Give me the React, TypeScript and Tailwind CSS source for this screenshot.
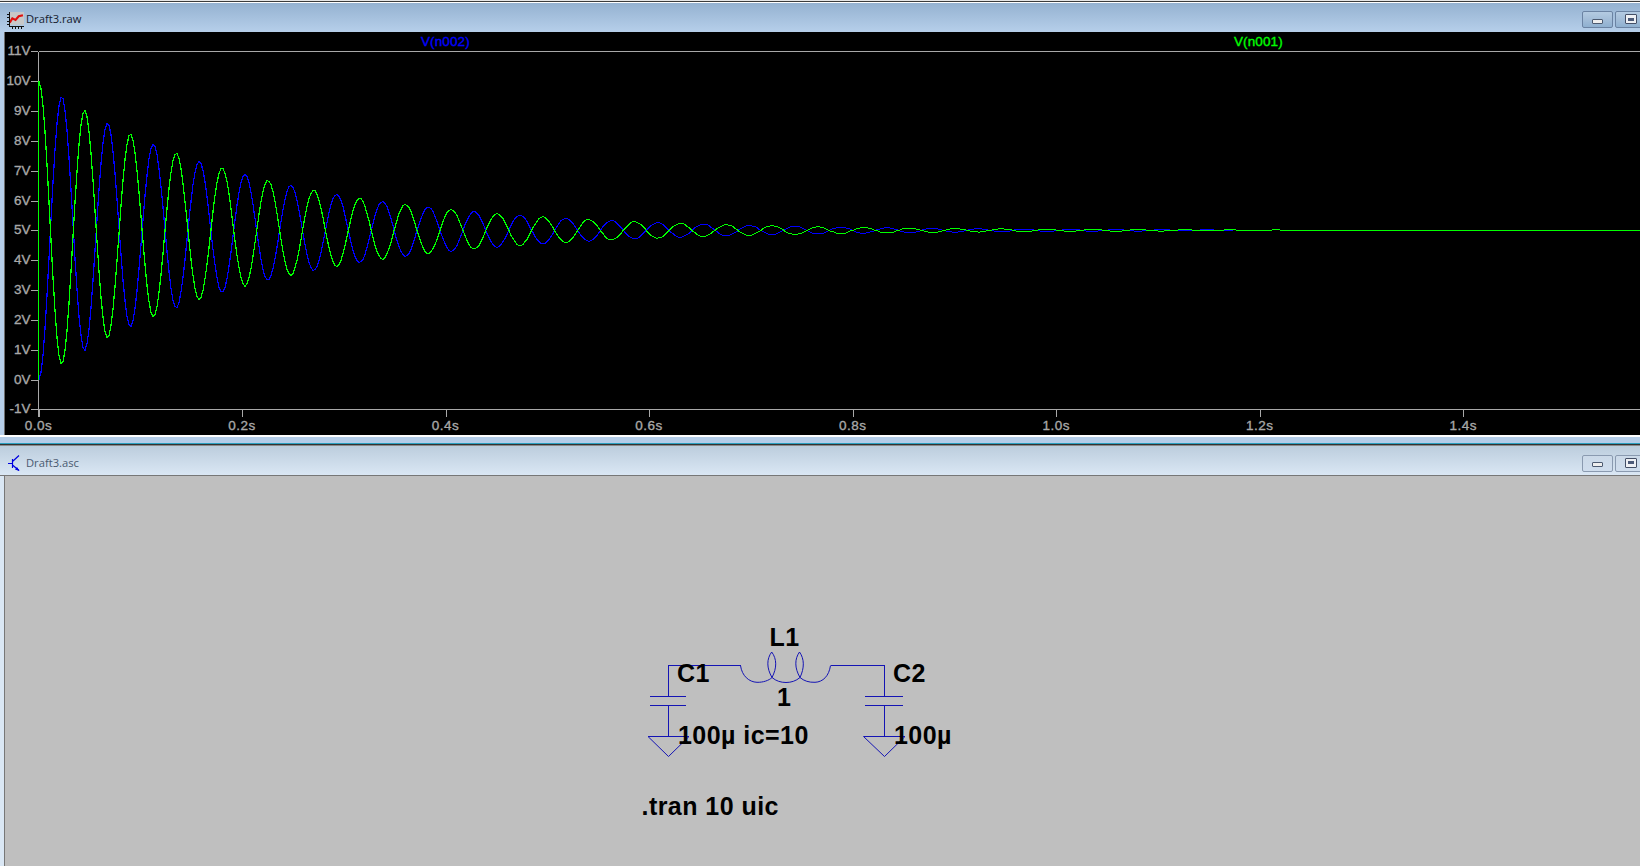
import React from "react";

const X0 = 38.5;
const PX_PER_S = 1017.7;
const Y0V = 379.5;
const PX_PER_V = 29.83;
const vy = (v: number) => Y0V - v * PX_PER_V;

function wave(sign: number, end: number) {
  const pts: string[] = [];
  for (let x = 39; x <= end; x += 2) {
    const dx = x - 39;
    const v = 5 + sign * 5 * Math.exp(-0.00478 * dx) * Math.cos((2 * Math.PI * dx) / 45.83);
    pts.push(`${x},${Math.floor(vy(v)) + 0.5}`);
  }
  pts.push(`${end},230.5`);
  return pts.join(" ");
}

const yTicks = [-1, 0, 1, 2, 3, 4, 5, 6, 7, 8, 9, 10, 11];
const xTicks = [0, 0.2, 0.4, 0.6, 0.8, 1.0, 1.2, 1.4];

function Plot() {
  return (
    <svg viewBox="5 32 1635 403" className="block h-[403px] w-[1635px] bg-black" fontFamily="'Liberation Sans', Arial, sans-serif">
      <g stroke="#a8a8a8" strokeWidth="1" shapeRendering="crispEdges">
        <line x1="38.5" y1="51.5" x2="1640" y2="51.5" />
        <line x1="38.5" y1="409.5" x2="1640" y2="409.5" />
        <line x1="38.5" y1="51.5" x2="38.5" y2="417" />
        {yTicks.map((v) => (
          <line key={v} x1="31" x2="38" y1={Math.round(vy(v)) + 0.5} y2={Math.round(vy(v)) + 0.5} />
        ))}
        {xTicks.map((t) => {
          const x = Math.round(X0 + t * PX_PER_S) + 0.5;
          return <line key={t} x1={x} x2={x} y1="409" y2="417" />;
        })}
      </g>
      <g fill="#a8a8a8" fontSize="13.5" fontWeight="400" stroke="#a8a8a8" strokeWidth="0.35">
        {yTicks.map((v) => (
          <text key={v} x="30.5" y={vy(v) + 4} textAnchor="end">{`${v}V`}</text>
        ))}
        {xTicks.map((t) => (
          <text key={t} x={X0 + t * PX_PER_S} y="429.5" textAnchor="middle" letterSpacing="0.5">{`${t.toFixed(1)}s`}</text>
        ))}
      </g>
      <text x="421" y="46" fill="#0000ff" fontSize="13.5" stroke="#0000ff" strokeWidth="0.35" letterSpacing="0.1">V(n002)</text>
      <text x="1234" y="46" fill="#00ff00" fontSize="13.5" stroke="#00ff00" strokeWidth="0.35" letterSpacing="0.1">V(n001)</text>
      <g fill="none" strokeWidth="1.25" shapeRendering="crispEdges">
        <polyline points={wave(-1, 1233)} stroke="#0000ff" />
        <polyline points={wave(1, 1640)} stroke="#00ff00" />
        <line x1="38.5" y1="81" x2="38.5" y2="380" stroke="#00ff00" />
      </g>
    </svg>
  );
}

function Schematic() {
  const c = "#1414b4";
  return (
    <svg viewBox="5 476 1635 390" className="block h-[390px] w-[1635px] bg-[#bfbfbf]" fontFamily="'Liberation Sans', Arial, sans-serif">
      <g fill="none" stroke={c} strokeWidth="1">
        <g shapeRendering="crispEdges">
          <polyline points="740.5,665.5 668.5,665.5 668.5,696" />
          <line x1="650" x2="686" y1="696.5" y2="696.5" />
          <line x1="650" x2="686" y1="705.5" y2="705.5" />
          <line x1="668.5" x2="668.5" y1="705" y2="737" />
          <polyline points="830.5,665.5 884.5,665.5 884.5,696" />
          <line x1="865" x2="903" y1="696.5" y2="696.5" />
          <line x1="865" x2="903" y1="705.5" y2="705.5" />
          <line x1="884.5" x2="884.5" y1="705" y2="737" />
        </g>
        <polygon points="648,736.5 689,736.5 668.5,756.5" />
        <polygon points="863.5,736.5 905,736.5 884.5,756.5" />
        <path d="M740.5 665.5C742 676 749 682 757 682.3C763 682.5 769 680.5 772 677.5C766.5 668 766.5 659 771.7 652C777 659 777 668 772 677.5C776 681 781 682.5 786 682.5C791 682.5 796 681 800 677.5C794.5 668 794.5 659 799.5 652C804.5 659 804.5 668 800 677.5C804 681 809 682.5 815 682.3C823 682 829 676 830.5 665.5" />
      </g>
      <g fill="#000000" fontSize="25" fontWeight="700" letterSpacing="0.45">
        <text x="769.5" y="645.7">L1</text>
        <text x="677" y="682">C1</text>
        <text x="893" y="682">C2</text>
        <text x="777" y="706">1</text>
        <text x="678" y="744">100µ ic=10</text>
        <text x="894" y="744">100µ</text>
        <text x="641.5" y="815">.tran 10 uic</text>
      </g>
    </svg>
  );
}

function RawIcon() {
  return (
    <svg viewBox="0 0 17 17" className="h-[18px] w-[18px]">
      <rect x="3" y="1" width="14" height="12" fill="#c8c8c8" />
      <path d="M3.5 11L6 7L9 8.5L12 5L16 4" fill="none" stroke="#e01010" strokeWidth="2" />
      <path d="M3.5 1V14.5H17M1 3.5H3.5M1 6.5H3.5M1 9.5H3.5M1 12.5H3.5M6 14.5V17M9 14.5V17M12 14.5V17M15 14.5V17" fill="none" stroke="#111111" strokeWidth="1" shapeRendering="crispEdges" />
    </svg>
  );
}

function AscIcon() {
  return (
    <svg viewBox="0 0 12 16" className="h-[16px] w-[12px]">
      <path d="M0 8.5H4M4.5 4V13M4.5 6.5L11 0.5M4.5 10L11 15.5" fill="none" stroke="#0000e0" strokeWidth="1.2" />
      <path d="M11.5 16L7 14.5L9 12Z" fill="#0000e0" />
    </svg>
  );
}

function WinButton({ active, kind }: { active: boolean; kind: "min" | "max" }) {
  return (
    <div
      className={
        active
          ? "flex h-[17px] w-[31px] items-center justify-center rounded-[2px] border border-[#6b83a3] bg-linear-to-b from-[#b4cbe2] via-[#a3bdd8] to-[#8fb0d0]"
          : "flex h-[17px] w-[31px] items-center justify-center rounded-[2px] border border-[#8a9ab0] bg-linear-to-b from-[#cbd9e8] to-[#cfdded]"
      }
    >
      {kind === "min" ? (
        <div className="mt-[3px] h-[5px] w-[11px] rounded-[1px] border border-[#4c5a70] bg-[#eeeeee]" />
      ) : (
        <div className="-mt-[1px] flex h-[10px] w-[12px] items-center justify-center rounded-[1px] border border-[#444f66] bg-[#eef0f4]">
          <div className="h-[3px] w-[6px] bg-[#4c5a78]" />
        </div>
      )}
    </div>
  );
}

function TitleBar({ active, title }: { active: boolean; title: string }) {
  return (
    <div
      className={
        active
          ? "flex h-[29px] items-center bg-linear-to-b from-[#95b2d1] to-[#b6cfea] pl-[6px] pt-[4px]"
          : "flex h-[29px] items-center bg-linear-to-b from-[#bccddd] to-[#dae7f4] pl-[8px] pt-[5px]"
      }
    >
      <div className="flex w-[20px] justify-start">{active ? <RawIcon /> : <AscIcon />}</div>
      <span
        className={
          active
            ? "text-[11.2px] font-['Open_Sans',sans-serif] text-[#15202e]"
            : "text-[11.2px] font-['Open_Sans',sans-serif] text-[#4a5a70] -ml-[2px]"
        }
      >
        {title}
      </span>
      <div className="ml-auto -mr-[6px] flex gap-[2px]">
        <WinButton active={active} kind="min" />
        <WinButton active={active} kind="max" />
      </div>
    </div>
  );
}

export default function App() {
  return (
    <div className="flex h-[866px] w-[1640px] flex-col overflow-hidden bg-white">
      <div className="h-[1px] bg-[#e6e6e6]" />
      <div className="h-[1px] bg-[#3c3c3c]" />
      <div className="h-[1px] bg-white" />
      <TitleBar active title="Draft3.raw" />
      <div className="flex">
        <div className="w-[4px] bg-[#b6cfea]" />
        <div className="w-[1px] bg-[#6e6e6e]" />
        <Plot />
      </div>
      <div className="h-[2px] bg-white" />
      <div className="h-[6px] bg-[#b4cde9]" />
      <div className="h-[1px] bg-[#2aa0c0]" />
      <div className="h-[1px] bg-[#333333]" />
      <div className="h-[1px] bg-[#8a8a8a]" />
      <TitleBar active={false} title="Draft3.asc" />
      <div className="flex flex-1 border-t border-[#777777]">
        <div className="w-[4px] bg-[#dae7f4]" />
        <div className="w-[1px] bg-[#777777]" />
        <Schematic />
      </div>
    </div>
  );
}
